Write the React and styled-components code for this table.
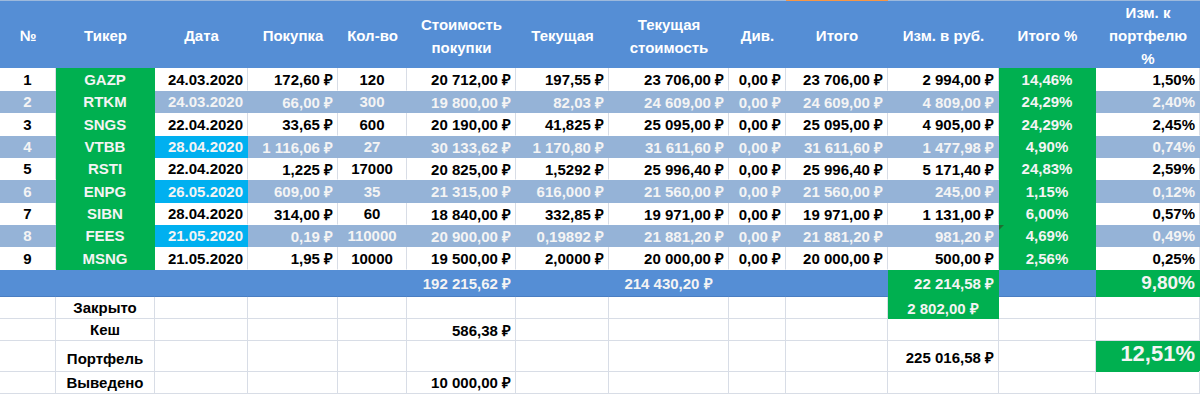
import React from 'react';
import styled, { createGlobalStyle } from 'styled-components';

const COLS = '56px 99px 93px 90px 69px 109px 93px 120px 57px 102px 111px 97px 104px';

const BLUE = '#558ED5';
const BAND = '#95B3D7';
const GREEN = '#00B050';
const CYAN = '#00B0F0';
const GRID = '#D8DDE6';

const GlobalStyle = createGlobalStyle`
  * { box-sizing: border-box; }
  body {
    margin: 0;
    background: #fff;
    font-family: 'Liberation Sans', Arial, sans-serif;
  }
`;

const Sheet = styled.div`
  width: 1200px;
  height: 394px;
  overflow: hidden;
  display: flex;
  flex-direction: column;
`;

const Row = styled.div`
  display: grid;
  grid-template-columns: ${COLS};
  height: ${(p) => p.$h}px;
  flex: none;
  background: ${(p) => p.$bg || '#fff'};
`;

const HeadCell = styled.div`
  display: flex;
  align-items: center;
  justify-content: center;
  text-align: center;
  background: ${BLUE};
  color: #fff;
  font-size: 15px;
  font-weight: bold;
  line-height: 23px;
  border-top: 1px solid ${(p) => (p.$accent ? '#F79646' : '#9DB9DC')};
`;

const justify = { left: 'flex-start', center: 'center', right: 'flex-end' };

const Cell = styled.div`
  position: relative;
  display: flex;
  align-items: ${(p) => (p.$v === 'end' ? 'flex-end' : 'center')};
  justify-content: ${(p) => justify[p.$align || 'right']};
  padding: 0 4px ${(p) => (p.$v === 'end' ? '4px' : '0')};
  background: ${(p) => p.$bg || 'transparent'};
  color: ${(p) => (p.$light ? '#F4F4F4' : '#000')};
  font-size: ${(p) => p.$size || 15}px;
  font-weight: bold;
  white-space: nowrap;
  border-right: 1px solid ${(p) => p.$lineR || 'transparent'};
  border-bottom: 1px solid ${(p) => p.$lineB || 'transparent'};

  /* excel error marker */
  &::before {
    content: '';
    display: ${(p) => (p.$flag ? 'block' : 'none')};
    position: absolute;
    left: 0;
    top: 0;
    border-top: 5px solid #1F6E30;
    border-right: 5px solid transparent;
  }
`;

const headers = [
  ['№'],
  ['Тикер'],
  ['Дата'],
  ['Покупка'],
  ['Кол-во'],
  ['Стоимость', 'покупки'],
  ['Текущая'],
  ['Текущая', 'стоимость'],
  ['Див.'],
  ['Итого'],
  ['Изм. в руб.'],
  ['Итого %'],
  ['Изм. к', 'портфелю', '%'],
];

const rows = [
  ['1', 'GAZP', '24.03.2020', '172,60 ₽', '120', '20 712,00 ₽', '197,55 ₽', '23 706,00 ₽', '0,00 ₽', '23 706,00 ₽', '2 994,00 ₽', '14,46%', '1,50%'],
  ['2', 'RTKM', '24.03.2020', '66,00 ₽', '300', '19 800,00 ₽', '82,03 ₽', '24 609,00 ₽', '0,00 ₽', '24 609,00 ₽', '4 809,00 ₽', '24,29%', '2,40%'],
  ['3', 'SNGS', '22.04.2020', '33,65 ₽', '600', '20 190,00 ₽', '41,825 ₽', '25 095,00 ₽', '0,00 ₽', '25 095,00 ₽', '4 905,00 ₽', '24,29%', '2,45%'],
  ['4', 'VTBB', '28.04.2020', '1 116,06 ₽', '27', '30 133,62 ₽', '1 170,80 ₽', '31 611,60 ₽', '0,00 ₽', '31 611,60 ₽', '1 477,98 ₽', '4,90%', '0,74%'],
  ['5', 'RSTI', '22.04.2020', '1,225 ₽', '17000', '20 825,00 ₽', '1,5292 ₽', '25 996,40 ₽', '0,00 ₽', '25 996,40 ₽', '5 171,40 ₽', '24,83%', '2,59%'],
  ['6', 'ENPG', '26.05.2020', '609,00 ₽', '35', '21 315,00 ₽', '616,000 ₽', '21 560,00 ₽', '0,00 ₽', '21 560,00 ₽', '245,00 ₽', '1,15%', '0,12%'],
  ['7', 'SIBN', '28.04.2020', '314,00 ₽', '60', '18 840,00 ₽', '332,85 ₽', '19 971,00 ₽', '0,00 ₽', '19 971,00 ₽', '1 131,00 ₽', '6,00%', '0,57%'],
  ['8', 'FEES', '21.05.2020', '0,19 ₽', '110000', '20 900,00 ₽', '0,19892 ₽', '21 881,20 ₽', '0,00 ₽', '21 881,20 ₽', '981,20 ₽', '4,69%', '0,49%'],
  ['9', 'MSNG', '21.05.2020', '1,95 ₽', '10000', '19 500,00 ₽', '2,0000 ₽', '20 000,00 ₽', '0,00 ₽', '20 000,00 ₽', '500,00 ₽', '2,56%', '0,25%'],
];

const rowHeights = [23, 22, 23, 22, 22, 23, 22, 22, 23];
const aligns = ['center', 'center', 'right', 'right', 'center', 'right', 'right', 'right', 'right', 'right', 'right', 'center', 'right'];
const cyanDates = [3, 5, 7];

const DataRow = ({ values, index }) => {
  const band = index % 2 === 1;
  return (
    <Row $h={rowHeights[index]} $bg={band ? BAND : '#fff'}>
      {values.map((v, c) => {
        let bg;
        if (c === 1 || c === 11) bg = GREEN;
        if (c === 2 && cyanDates.includes(index)) bg = CYAN;
        return (
          <Cell
            key={c}
            $align={aligns[c]}
            $bg={bg}
            $light={band || !!bg}
            $lineR={!band && !bg ? GRID : undefined}
            $flag={index === 7 && c === 11}
          >
            {v}
          </Cell>
        );
      })}
    </Row>
  );
};

const TotalRow = () => {
  const cells = Array(13).fill(null);
  return (
    <Row $h={27}>
      {cells.map((_, c) => {
        const green = c === 10 || c === 12;
        const props = {
          $bg: green ? GREEN : BLUE,
          $light: true,
          $lineB: green ? undefined : '#4A7EC2',
        };
        let text = '';
        if (c === 5) text = '192 215,62 ₽';
        if (c === 7) {
          text = '214 430,20 ₽';
          props.$align = 'center';
        }
        if (c === 10) text = '22 214,58 ₽';
        if (c === 12) {
          text = '9,80%';
          props.$size = 19;
        }
        return (
          <Cell key={c} {...props}>
            {text}
          </Cell>
        );
      })}
    </Row>
  );
};

const summary = [
  { h: 22, label: 'Закрыто', cells: { 10: { text: '2 802,00 ₽', bg: GREEN, align: 'center' } } },
  { h: 22, label: 'Кеш', cells: { 5: { text: '586,38 ₽' } } },
  {
    h: 30,
    label: 'Портфель',
    v: 'end',
    cells: {
      10: { text: '225 016,58 ₽' },
      12: { text: '12,51%', bg: GREEN, size: 22 },
    },
  },
  { h: 23, label: 'Выведено', cells: { 5: { text: '10 000,00 ₽' } } },
];

const SummaryRow = ({ row }) => (
  <Row $h={row.h}>
    {Array.from({ length: 13 }, (_, c) => {
      const spec = c === 1 ? { text: row.label, align: 'center' } : row.cells[c] || {};
      return (
        <Cell
          key={c}
          $v={row.v}
          $align={spec.align || 'right'}
          $bg={spec.bg}
          $light={!!spec.bg}
          $size={spec.size}
          $lineR={spec.bg ? undefined : GRID}
          $lineB={spec.bg ? undefined : GRID}
        >
          {spec.text}
        </Cell>
      );
    })}
  </Row>
);

export default function App() {
  return (
    <>
      <GlobalStyle />
      <Sheet>
        <Row $h={68}>
          {headers.map((lines, i) => (
            <HeadCell key={i} $accent={i === 9}>
              <div>
                {lines.map((l) => (
                  <div key={l}>{l}</div>
                ))}
              </div>
            </HeadCell>
          ))}
        </Row>
        {rows.map((r, i) => (
          <DataRow key={r[0]} values={r} index={i} />
        ))}
        <TotalRow />
        {summary.map((r) => (
          <SummaryRow key={r.label} row={r} />
        ))}
      </Sheet>
    </>
  );
}
